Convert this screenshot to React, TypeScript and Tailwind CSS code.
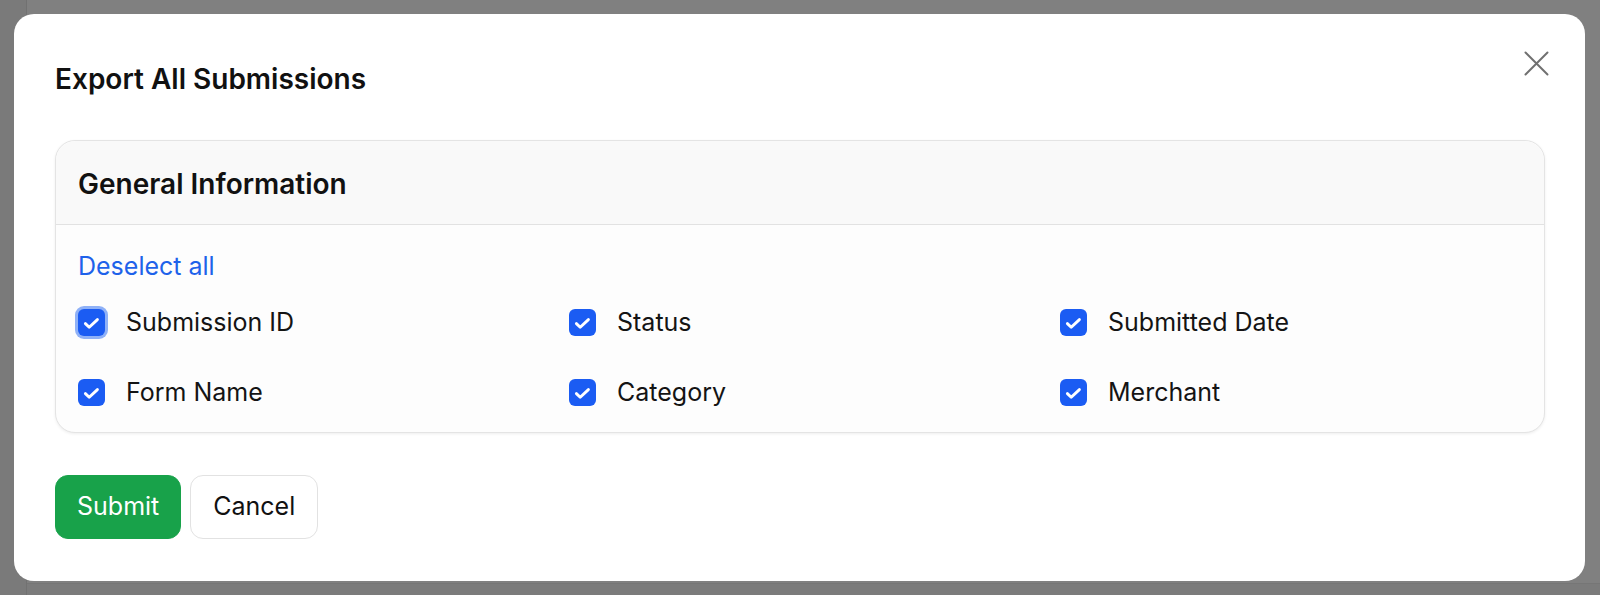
import { useState } from 'react'

const fields = [
  'Submission ID',
  'Status',
  'Submitted Date',
  'Form Name',
  'Category',
  'Merchant',
]

function CheckBox({ checked, focused }: { checked: boolean; focused?: boolean }) {
  return (
    <span
      className={`flex h-[27px] w-[27px] shrink-0 items-center justify-center rounded-[6px] ${
        checked ? 'bg-[#1b5cf3]' : 'border border-[#c9c9c9] bg-white'
      } ${focused ? 'ring-[3px] ring-[#8fb1f7]' : ''}`}
    >
      {checked && (
        <svg width="27" height="27" viewBox="0 0 27 27" fill="none">
          <path
            d="M7.4 14.6 11.2 18.3 19.4 10.6"
            stroke="white"
            strokeWidth="2.9"
            strokeLinecap="round"
            strokeLinejoin="round"
          />
        </svg>
      )}
    </span>
  )
}

export default function App() {
  const [selected, setSelected] = useState<string[]>(fields)
  const allSelected = selected.length === fields.length

  const toggle = (name: string) => {
    setSelected(prev => (prev.includes(name) ? prev.filter(f => f !== name) : [...prev, name]))
  }

  return (
    <div className="relative h-[595px] w-full overflow-hidden font-['Inter',sans-serif]">
      {/* dimmed page behind */}
      <div className="flex h-full w-full">
        <div className="h-full w-[27px] border-r border-[#717171] bg-[#7a7a7a]" />
        <div className="flex h-full flex-1 flex-col bg-[#808080]">
          <div className="flex-1" />
          <div className="h-[12px] border-t border-[#767676] bg-[#7b7b7b]" />
        </div>
      </div>

      {/* modal */}
      <div className="absolute inset-0 p-[14px] pr-[15px]">
        <div className="relative h-[567px] rounded-[20px] bg-white px-[41px] pb-[42px] pt-[43px] pr-[40px]">
          <button className="absolute right-[36px] top-[37px] text-[#707070]">
            <svg width="25" height="25" viewBox="0 0 25 25" fill="none">
              <path d="M1.5 1.5 23.5 23.5M23.5 1.5 1.5 23.5" stroke="currentColor" strokeWidth="2" strokeLinecap="round" />
            </svg>
          </button>

          <h2 className="text-[28px] font-semibold leading-[44px] text-[#111111]">Export All Submissions</h2>

          <div className="mt-[39px] rounded-[20px] border border-[#e4e4e4] bg-[#fdfdfd] shadow-[0_1px_3px_rgba(0,0,0,0.07)]">
            <div className="flex h-[84px] items-center rounded-t-[20px] border-b border-[#e2e2e2] bg-[#f9f9f9] px-[22px]">
              <h3 className="pt-[2px] text-[28px] font-semibold leading-[36px] text-[#111111]">General Information</h3>
            </div>
            <div className="px-[22px] pb-[22px] pt-[23px]">
              <button
                onClick={() => setSelected(allSelected ? [] : fields)}
                className="block text-[25px] leading-[36px] text-[#1e62ea]"
              >
                {allSelected ? 'Deselect all' : 'Select all'}
              </button>
              <div className="mt-[20px] grid grid-cols-3 gap-x-[29px] gap-y-[34px]">
                {fields.map((f, i) => (
                  <label key={f} onClick={() => toggle(f)} className="flex h-[36px] cursor-pointer items-center gap-[21px]">
                    <CheckBox checked={selected.includes(f)} focused={i === 0} />
                    <span className="text-[25px] leading-[36px] text-[#141414]">{f}</span>
                  </label>
                ))}
              </div>
            </div>
          </div>

          <div className="mt-[42px] flex items-center gap-[9px]">
            <button className="flex h-[64px] items-center rounded-[13px] border border-[#18a24a] bg-[#18a24a] px-[21px] text-[25px] text-white">
              Submit
            </button>
            <button className="flex h-[64px] items-center rounded-[13px] border border-[#e2e2e2] bg-white px-[22px] text-[25px] text-[#111111]">
              Cancel
            </button>
          </div>
        </div>
      </div>
    </div>
  )
}
